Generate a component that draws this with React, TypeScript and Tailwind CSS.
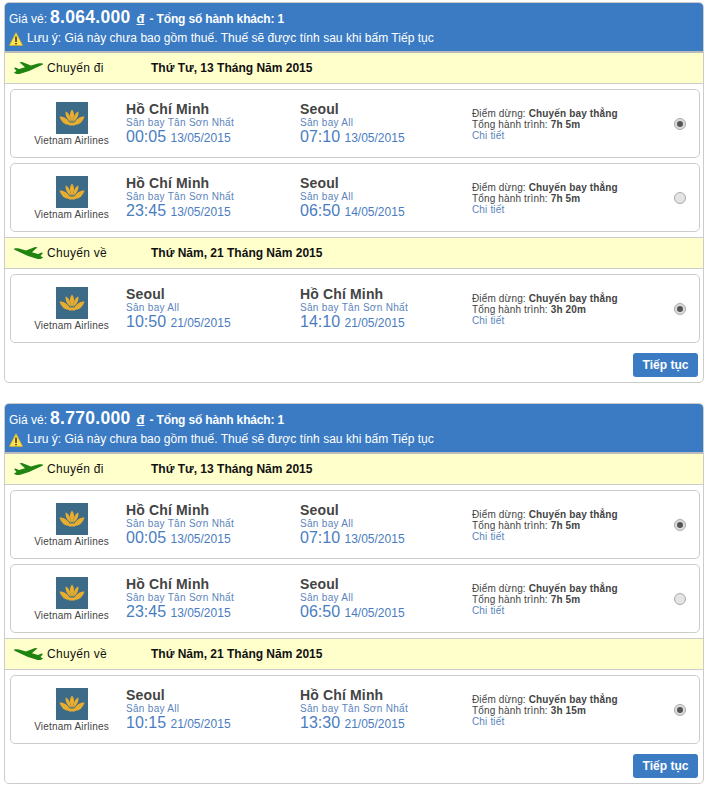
import React from "react";

type Leg = {
  from: string;
  fromPort: string;
  fromTime: string;
  to: string;
  toPort: string;
  toTime: string;
  fromDate: string;
  toDate: string;
  total: string;
  checked: boolean;
};

type Offer = {
  price: string;
  date1: string;
  date2: string;
  out: Leg[];
  back: Leg[];
};

const TSN = "Sân bay Tân Sơn Nhất";
const ALL = "Sân bay All";

const offers: Offer[] = [
  {
    price: "8.064.000",
    date1: "Thứ Tư, 13 Tháng Năm 2015",
    date2: "Thứ Năm, 21 Tháng Năm 2015",
    out: [
      { from: "Hồ Chí Minh", fromPort: TSN, fromTime: "00:05", fromDate: "13/05/2015", to: "Seoul", toPort: ALL, toTime: "07:10", toDate: "13/05/2015", total: "7h 5m", checked: true },
      { from: "Hồ Chí Minh", fromPort: TSN, fromTime: "23:45", fromDate: "13/05/2015", to: "Seoul", toPort: ALL, toTime: "06:50", toDate: "14/05/2015", total: "7h 5m", checked: false },
    ],
    back: [
      { from: "Seoul", fromPort: ALL, fromTime: "10:50", fromDate: "21/05/2015", to: "Hồ Chí Minh", toPort: TSN, toTime: "14:10", toDate: "21/05/2015", total: "3h 20m", checked: true },
    ],
  },
  {
    price: "8.770.000",
    date1: "Thứ Tư, 13 Tháng Năm 2015",
    date2: "Thứ Năm, 21 Tháng Năm 2015",
    out: [
      { from: "Hồ Chí Minh", fromPort: TSN, fromTime: "00:05", fromDate: "13/05/2015", to: "Seoul", toPort: ALL, toTime: "07:10", toDate: "13/05/2015", total: "7h 5m", checked: true },
      { from: "Hồ Chí Minh", fromPort: TSN, fromTime: "23:45", fromDate: "13/05/2015", to: "Seoul", toPort: ALL, toTime: "06:50", toDate: "14/05/2015", total: "7h 5m", checked: false },
    ],
    back: [
      { from: "Seoul", fromPort: ALL, fromTime: "10:15", fromDate: "21/05/2015", to: "Hồ Chí Minh", toPort: TSN, toTime: "13:30", toDate: "21/05/2015", total: "3h 15m", checked: true },
    ],
  },
];

function Plane({ back }: { back?: boolean }) {
  return (
    <svg width="31" height="14" viewBox="0 0 31 14" className={back ? "-scale-x-100" : ""}>
      <path
        d="M1 11.5 C2 13 5 13.5 8 12.5 L16 10 L30 3.5 C30.5 2.5 28 2 25 2.6 L18 4.6 L9 1 L6.5 1.2 L12 6.2 L6 8 L2.5 6.6 L1 7 L3.5 10 Z"
        fill="#1f8510"
      />
    </svg>
  );
}

function Logo() {
  return (
    <div className="flex flex-col items-center w-[109px] ml-[6px] pt-[12px]">
      <div className="w-8 h-8 bg-[#3b6b87] flex items-center justify-center">
        <svg width="26" height="18" viewBox="0 0 26 18">
          <g fill="#e9ad2f">
            <path d="M13 0.5 C15.6 3.5 15.8 8 13 13 C10.2 8 10.4 3.5 13 0.5 Z" />
            <path d="M6.6 2.5 C9.6 3.6 11.6 7.4 12 13 C8.4 10.6 6.2 7.2 6.6 2.5 Z" />
            <path d="M19.4 2.5 C16.4 3.6 14.4 7.4 14 13 C17.6 10.6 19.8 7.2 19.4 2.5 Z" />
            <path d="M0.5 7.5 C4.5 7.2 8.5 9.6 11.4 14.5 L12 15.8 L9 15.8 C5 15.4 2 12 0.5 7.5 Z" />
            <path d="M25.5 7.5 C21.5 7.2 17.5 9.6 14.6 14.5 L14 15.8 L17 15.8 C21 15.4 24 12 25.5 7.5 Z" />
            <path d="M9.5 13.5 L16.5 13.5 L16 16.5 L10 16.5 Z" />
          </g>
        </svg>
      </div>
      <div className="text-[10px] leading-[13px] text-[#444] tracking-[0.2px] whitespace-nowrap">Vietnam Airlines</div>
    </div>
  );
}

function Place({ city, port, time, date, width }: { city: string; port: string; time: string; date: string; width: string }) {
  return (
    <div className={`${width} pt-[11px]`}>
      <div className="text-[14px] leading-[16px] font-bold text-[#444] tracking-[0.15px]">{city}</div>
      <div className="text-[10px] leading-[11px] text-[#5b84bd] tracking-[0.3px]">{port}</div>
      <div className="leading-[17px] text-[#4a7dbf] whitespace-nowrap">
        <span className="text-[16px]">{time}</span> <span className="text-[12px]">{date}</span>
      </div>
    </div>
  );
}

function Row({ leg }: { leg: Leg }) {
  return (
    <div className="flex items-start h-[69px] border border-[#ccc] rounded-[5px] bg-white">
      <Logo />
      <Place city={leg.from} port={leg.fromPort} time={leg.fromTime} date={leg.fromDate} width="w-[174px]" />
      <Place city={leg.to} port={leg.toPort} time={leg.toTime} date={leg.toDate} width="w-[172px]" />
      <div className="w-[202px] pt-[18px] text-[10px] leading-[11px] text-[#444] tracking-[0.15px]">
        <div>
          Điểm dừng: <b>Chuyến bay thẳng</b>
        </div>
        <div>
          Tổng hành trình: <b>{leg.total}</b>
        </div>
        <div className="text-[#5b84bd]">Chi tiết</div>
      </div>
      <div
        className={`w-3 h-3 mt-[28px] rounded-full border border-[#aaa] flex items-center justify-center ${
          leg.checked ? "bg-[#dcdcdc]" : "bg-[#e4e4e4]"
        }`}
      >
        {leg.checked && <div className="w-[6px] h-[6px] rounded-full bg-[#555]" />}
      </div>
    </div>
  );
}

function DirectionBar({ label, date, back }: { label: string; date: string; back?: boolean }) {
  return (
    <div
      className={`flex items-center bg-[#ffffcc] border-b border-[#ccc] pl-2 text-[12px] text-[#111] ${
        back ? "h-[32px] border-t" : "h-[31px]"
      }`}
    >
      <Plane back={back} />
      <span className="ml-[3px] w-[104px] tracking-[0.3px]">{label}</span>
      <b>{date}</b>
    </div>
  );
}

function OfferPanel({ offer }: { offer: Offer }) {
  return (
    <div className="w-[700px] h-[381px] border border-[#ccc] rounded-[5px] bg-white overflow-hidden">
      <div className="bg-[#3a7bc4] h-[51px] border-b-2 border-[#bbb] px-[5px] pt-[4px] text-white -mx-px -mt-px">
        <div className="flex items-baseline text-[12px] leading-[23px]">
          <span>Giá vé:</span>
          <b className="text-[17.5px] ml-[3px] tracking-[0.3px]">{offer.price}</b>
          <b className="ml-[6px] underline text-[13px]">đ</b>
          <b className="ml-[5px] tracking-[-0.15px]">- Tổng số hành khách: 1</b>
        </div>
        <div className="flex items-center text-[12px] leading-[15px] tracking-[0.03px]">
          <svg width="14" height="14" viewBox="0 0 14 14" className="mr-[4px]">
            <path d="M7 0.5 L13.7 13.5 L0.3 13.5 Z" fill="#ffe14d" stroke="#d9a800" strokeWidth="0.5" />
            <rect x="6.3" y="4.5" width="1.4" height="5.5" fill="#222" />
            <rect x="6.3" y="11" width="1.4" height="1.4" fill="#222" />
          </svg>
          Lưu ý: Giá này chưa bao gồm thuế. Thuế sẽ được tính sau khi bấm Tiếp tục
        </div>
      </div>
      <DirectionBar label="Chuyến đi" date={offer.date1} />
      <div className="flex flex-col gap-[5px] pl-[5px] pr-[3px] py-[5px]">
        {offer.out.map((leg, i) => (
          <Row key={i} leg={leg} />
        ))}
      </div>
      <DirectionBar label="Chuyến về" date={offer.date2} back />
      <div className="pl-[5px] pr-[3px] pt-[5px]">
        {offer.back.map((leg, i) => (
          <Row key={i} leg={leg} />
        ))}
      </div>
      <div className="flex justify-end pr-[5px] pt-[10px]">
        <button className="w-[65px] h-6 bg-[#3a7bc4] rounded-[3px] text-white text-[12px] font-bold">Tiếp tục</button>
      </div>
    </div>
  );
}

export default function App() {
  return (
    <div className="w-[711px] h-[790px] bg-white pl-[4px] pt-[2px] flex flex-col gap-[20px] overflow-hidden font-['Liberation_Sans',Arial,sans-serif]">
      {offers.map((o) => (
        <OfferPanel key={o.price} offer={o} />
      ))}
    </div>
  );
}
